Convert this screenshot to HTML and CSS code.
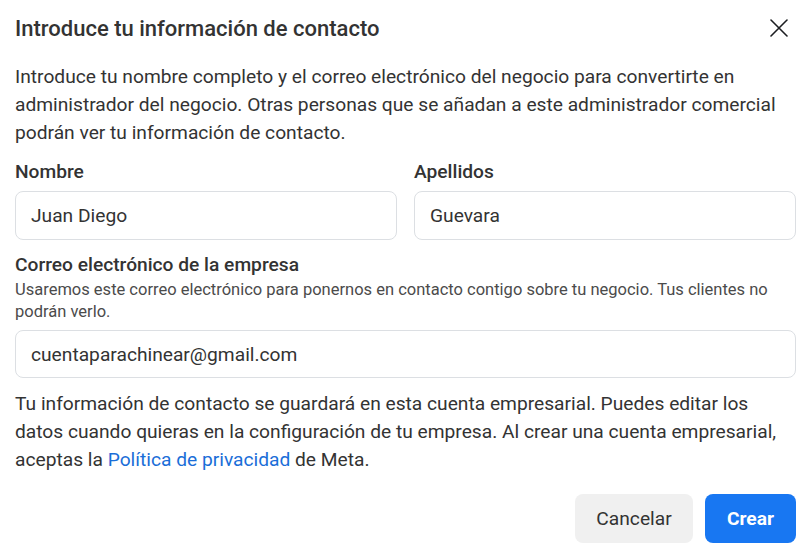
FILE: index.html
```html
<!DOCTYPE html>
<html lang="es">
<head>
<meta charset="utf-8">
<link rel="stylesheet" href="styles.css">
</head>
<body>
<div class="dialog">
  <header class="head">
    <h1 class="title">Introduce tu información de contacto</h1>
    <button class="close" aria-label="Cerrar">
      <svg width="18" height="18" viewBox="0 0 18 18"><path d="M1 1L17 17M17 1L1 17" stroke="#1c1e21" stroke-width="1.6" stroke-linecap="round"/></svg>
    </button>
  </header>
  <p class="intro">Introduce tu nombre completo y el correo electrónico del negocio para convertirte en administrador del negocio. Otras personas que se añadan a este administrador comercial podrán ver tu información de contacto.</p>
  <div class="row">
    <div class="field">
      <label class="label">Nombre</label>
      <div class="input">Juan Diego</div>
    </div>
    <div class="field">
      <label class="label">Apellidos</label>
      <div class="input">Guevara</div>
    </div>
  </div>
  <div class="field email">
    <label class="label">Correo electrónico de la empresa</label>
    <p class="help">Usaremos este correo electrónico para ponernos en contacto contigo sobre tu negocio. Tus clientes no podrán verlo.</p>
    <div class="input">cuentaparachinear@gmail.com</div>
  </div>
  <p class="note">Tu información de contacto se guardará en esta cuenta empresarial. Puedes editar los datos cuando quieras en la configuración de tu empresa. Al crear una cuenta empresarial, aceptas la <a class="link" href="#">Política de privacidad</a> de Meta.</p>
  <footer class="actions">
    <button class="btn cancel">Cancelar</button>
    <button class="btn create">Crear</button>
  </footer>
</div>
</body>
</html>
```
FILE: styles.css
```css
* { box-sizing: border-box; }
html, body { margin: 0; padding: 0; background: #fff; }
body { font-family: Roboto, "Noto Sans", sans-serif; color: #333; width: 812px; height: 548px; overflow: hidden; }
.dialog { padding: 13px 16px 0 15px; }
.head { display: flex; align-items: center; justify-content: space-between; height: 30px; }
.title { margin: 0; font-size: 22px; font-weight: 500; color: #333; }
.close { border: 0; background: none; padding: 0; margin-right: 8px; display: flex; }
.intro { margin: 20px 0 0; font-size: 19.2px; line-height: 28px; color: #333; }
.row { display: grid; grid-template-columns: 1fr 1fr; gap: 17px; margin-top: 13px; }
.field { display: flex; flex-direction: column; }
.label { font-size: 19.2px; font-weight: 500; line-height: 24px; color: #333; margin-bottom: 7px; }
.input { height: 49px; border: 1px solid #dcdfe3; border-radius: 8px; padding: 0 15px; display: flex; align-items: center; font-size: 19.2px; color: #333; }
.email { margin-top: 13px; }
.email .label { margin-bottom: 2px; }
.help { margin: 0 0 7px; font-size: 16.5px; line-height: 22px; color: #4b4b4b; }
.email .input { height: 48px; }
.note { margin: 12px 0 0; font-size: 19.2px; line-height: 28px; color: #333; }
.link { color: #1a6ed8; text-decoration: none; }
.actions { display: flex; justify-content: flex-end; gap: 12px; margin-top: 20px; }
.btn { height: 49px; border: 0; border-radius: 8px; font-family: Roboto, sans-serif; font-size: 19.2px; padding: 0; }
.cancel { background: #f0f0f0; color: #333; width: 118px; }
.create { background: #1877f2; color: #fff; font-weight: 700; width: 91px; }
```
